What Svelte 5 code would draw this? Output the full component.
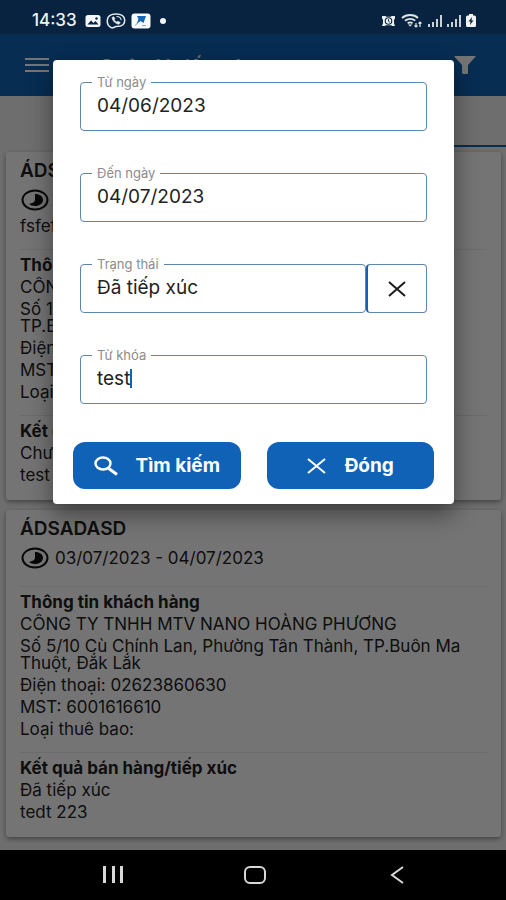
<script>
  let filter = $state({
    fromDate: "04/06/2023",
    toDate: "04/07/2023",
    status: "Đã tiếp xúc",
    keyword: "test",
  });

  const statuses = ["Đã tiếp xúc", "Chưa tiếp xúc"];

  const customer = {
    name: "CÔNG TY TNHH MTV NANO HOÀNG PHƯƠNG",
    phone: "02623860630",
    taxCode: "6001616610",
    type: "",
  };

  const visits = [
    {
      title: "ÁDSADASD",
      period: "03/07/2023 - 04/07/2023",
      note: "fsfef",
      customer,
      address: "Số 10 Cù Chính Lan, Phường Tân Thành,\nTP.Buôn Ma Thuột, Đắk Lắk",
      result: "Chưa tiếp xúc",
      remark: "test",
    },
    {
      title: "ÁDSADASD",
      period: "03/07/2023 - 04/07/2023",
      note: "",
      customer,
      address: "Số 5/10 Cù Chính Lan, Phường Tân Thành, TP.Buôn Ma\nThuột, Đắk Lắk",
      result: "Đã tiếp xúc",
      remark: "tedt 223",
    },
  ];

  function clearStatus() {
    filter.status = "";
  }
</script>

<div class="screen">
  <div class="status-bar">
    <div class="status-left">
      <span class="clock">14:33</span>
      <svg width="16" height="14" viewBox="0 0 16 14">
        <rect x="0.5" y="1" width="15" height="12" rx="2.5" fill="#f4f6f8" />
        <path d="M2.5 10.5l3.5-4 2.5 2.5 2-2 3 3.5z" fill="#07233f" />
        <circle cx="11.5" cy="4.5" r="1.2" fill="#07233f" />
      </svg>
      <svg width="20" height="16" viewBox="0 0 20 16" fill="none" stroke="#e6eaee" stroke-width="1.5">
        <path d="M5 14.5C2 13 1 10.5 1.3 7 1.7 3 4.5 1 10 1s8.500 2 8.700 6-1.700 6.500-8.700 6.500L6.500 15z" />
        <path d="M6 4.500c.4 3.500 3.500 6.300 7 6.800l1.300-1.700-2.300-1.400-1.100.8C9.500 8.500 8.700 7.700 8.200 6.700l.8-1-1.300-2z" fill="#e6eaee" stroke-width="0.6" />
        <path d="M10.500 3.500c2.500 0 4.500 1.500 4.700 3.800" stroke-width="1.1" />
      </svg>
      <svg width="20" height="16" viewBox="0 0 20 16">
        <rect x="0.5" y="0.5" width="19" height="15" rx="3" fill="#f7f9fb" />
        <path d="M6 3h9l-2.500 7-3-2-4 3.500L7.500 6z" fill="#1565b5" />
        <path d="M4 12.500l4-3.500M11 12.500h4" stroke="#8fa6be" />
      </svg>
      <span class="dot"></span>
    </div>
    <div class="status-right">
      <svg width="15" height="12" viewBox="0 0 16 13">
        <path d="M1 1h3.500l1 1h5l1-1H15v3l-1 1v4l1 3h-3l-1-1H5l-1 1H1l1-3V5L1 4z" fill="#eef1f4" />
        <circle cx="8" cy="6.500" r="3.500" fill="none" stroke="#07233f" stroke-width="1.2" />
        <path d="M8 4.500v2.300l1.500 1" fill="none" stroke="#07233f" />
      </svg>
      <svg width="22" height="14" viewBox="0 0 22 14" fill="none" stroke="#dfe4e9" stroke-width="1.8">
        <path d="M1 4c4.500-4 12-4 16 0M4 6.700c3-2.500 7.500-2.500 10.200 0M6.700 9.300c1.300-1.200 3.500-1.200 4.800 0" />
        <path d="M9 12.500l2.500-2H7z" fill="#dfe4e9" stroke="none" />
        <path d="M15 9v4M13.500 11.500l1.500 1.500 1.500-1.500M19 13V8M17.500 9.500L19 8l1.500 1.500" stroke-width="1.2" />
      </svg>
      {#each [1, 2] as sim (sim)}
        <svg width="14" height="12" viewBox="0 0 14 12" fill="#c8d0d8">
          <rect x="0" y="9" width="2" height="3" />
          <rect x="4" y="7" width="2" height="5" />
          <rect x="8" y="4" width="2" height="8" />
          <rect x="12" y="0" width="2" height="12" />
        </svg>
      {/each}
      <svg width="10" height="13" viewBox="0 0 10 13">
        <path d="M3 0h4v1.500h1.500Q10 1.500 10 3v8.500Q10 13 8.500 13h-7Q0 13 0 11.500V3q0-1.500 1.500-1.500H3z" fill="#f1f3f5" />
        <path d="M6 3L2.500 7.500h2L4 11l3.500-4.500h-2z" fill="#07233f" />
      </svg>
    </div>
  </div>

  <header class="app-bar">
    <button class="icon-button" aria-label="Menu">
      <svg width="24" height="15" viewBox="0 0 24 15" fill="#fff">
        <rect width="24" height="2" />
        <rect y="6" width="24" height="2" />
        <rect y="12" width="24" height="2" />
      </svg>
    </button>
    <h1>Quản lý tiếp xúc</h1>
    <button class="icon-button" aria-label="Filter">
      <svg width="22" height="18" viewBox="0 0 22 18" fill="#fff">
        <path d="M1 0h20q1 0 .3 1L14 9v8q0 1-1 1h-4L8 17V9L.7 1Q0 0 1 0z" />
      </svg>
    </button>
  </header>

  <nav class="tabs">
    <button aria-label="Previous"></button>
    <button class="active" aria-label="Current"></button>
  </nav>

  <main>
    {#each visits as visit}
      <article class="card">
        <h2>{visit.title}</h2>
        <div class="period">
          <svg width="28" height="22" viewBox="0 0 28 22">
            <ellipse cx="14" cy="11" rx="12.5" ry="9.5" fill="none" stroke="#111" stroke-width="2" />
            <path d="M14 5c5 0 8 2.600 8 6s-3.500 6-8 6c-2.400 0-4.500-.8-6-2 3.500-1 6-2 6-4z" fill="#111" />
          </svg>
          <span>{visit.period}</span>
        </div>
        {#if visit.note}
          <p class="note">{visit.note}</p>
        {/if}
        <section>
          <h3>Thông tin khách hàng</h3>
          <p>{visit.customer.name}</p>
          <p>{visit.address}</p>
          <p>Điện thoại: {visit.customer.phone}</p>
          <p>MST: {visit.customer.taxCode}</p>
          <p>Loại thuê bao: {visit.customer.type}</p>
        </section>
        <section>
          <h3>Kết quả bán hàng/tiếp xúc</h3>
          <p>{visit.result}</p>
          <p>{visit.remark}</p>
        </section>
      </article>
    {/each}
  </main>

  <footer class="nav-bar">
    <button aria-label="Recent apps">
      <svg width="22" height="18" viewBox="0 0 22 18" fill="#d8d8d8">
        <rect x="1" y="0" width="3" height="17" />
        <rect x="10" y="0" width="3" height="17" />
        <rect x="18" y="0" width="3" height="17" />
      </svg>
    </button>
    <button aria-label="Home">
      <svg width="24" height="20" viewBox="0 0 24 20" fill="none" stroke="#d8d8d8" stroke-width="2">
        <rect x="2" y="2" width="20" height="16" rx="5" />
      </svg>
    </button>
    <button aria-label="Back">
      <svg width="14" height="18" viewBox="0 0 14 18" fill="none" stroke="#d8d8d8" stroke-width="2">
        <path d="M13 1L2 9l11 8" />
      </svg>
    </button>
  </footer>

  <div class="backdrop">
    <form class="dialog" onsubmit={(e) => e.preventDefault()}>
      <div class="fields">
        <div class="field">
          <label for="from-date">Từ ngày</label>
          <input id="from-date" type="text" bind:value={filter.fromDate} />
        </div>
        <div class="field">
          <label for="to-date">Đến ngày</label>
          <input id="to-date" type="text" bind:value={filter.toDate} />
        </div>
        <div class="field-row">
          <div class="field">
            <label for="status">Trạng thái</label>
            <select id="status" bind:value={filter.status}>
              {#each statuses as status}
                <option value={status}>{status}</option>
              {/each}
            </select>
          </div>
          <button type="button" class="clear" aria-label="Clear" onclick={clearStatus}>
            <svg width="18" height="16" viewBox="0 0 18 16" fill="none" stroke="#1c1c1c" stroke-width="2">
              <path d="M1 1l16 14M17 1L1 15" />
            </svg>
          </button>
        </div>
        <div class="field">
          <label for="keyword">Từ khóa</label>
          <input id="keyword" class="keyword" type="text" bind:value={filter.keyword} />
          <span class="caret"></span>
        </div>
      </div>

      <div class="actions">
        <button type="submit">
          <svg width="24" height="20" viewBox="0 0 24 20" fill="none" stroke="#fff">
            <ellipse cx="9" cy="7.5" rx="7.5" ry="6" stroke-width="2.4" />
            <path d="M14 12l9 6.5" stroke-width="3" />
          </svg>
          <span>Tìm kiếm</span>
        </button>
        <button type="button">
          <svg width="20" height="16" viewBox="0 0 20 16" fill="none" stroke="#fff" stroke-width="2">
            <path d="M1 1l17 14M18 1L1 15" />
          </svg>
          <span>Đóng</span>
        </button>
      </div>
    </form>
  </div>
</div>

<style>
  :global(body) {
    margin: 0;
    background: #000;
  }

  .screen {
    position: relative;
    display: flex;
    flex-direction: column;
    min-height: 100vh;
    background: #f0f0f0;
    color: #222;
    font-family: Inter, "Noto Sans", sans-serif;
    font-size: 17px;
    line-height: 17px;
  }

  button,
  input,
  select {
    margin: 0;
    padding: 0;
    border: 0;
    background: none;
    color: inherit;
    font: inherit;
  }

  svg {
    display: block;
    flex: none;
  }

  h1,
  h2,
  h3,
  p {
    margin: 0;
  }

  .status-bar {
    position: relative;
    z-index: 2;
    display: flex;
    justify-content: space-between;
    align-items: center;
    height: 34px;
    padding: 7px 30px 0 32px;
    box-sizing: border-box;
    background: #07233f;
    color: #f1f3f5;
  }

  .status-left,
  .status-right {
    display: flex;
    align-items: center;
    gap: 5px;
  }

  .clock {
    margin-right: 3px;
    font-weight: 500;
  }

  .dot {
    width: 6px;
    height: 6px;
    margin-left: 4px;
    border-radius: 50%;
    background: #f1f3f5;
  }

  .app-bar {
    display: flex;
    align-items: center;
    height: 62px;
    padding: 0 30px 0 25px;
    background: #1062b6;
    color: #fff;
  }

  h1 {
    flex: 1;
    padding: 4px 0 0 50px;
    font-size: 20px;
    font-weight: 600;
    line-height: 24px;
  }

  .tabs {
    display: flex;
    height: 51px;
  }

  .tabs button {
    flex: 1;
  }

  .tabs .active {
    border-bottom: 2px solid #1062b6;
  }

  main {
    display: flex;
    flex: 1;
    flex-direction: column;
    gap: 10px;
    padding: 5px 5px 13px 6px;
  }

  .card {
    padding: 9px 14px 16px;
    border-radius: 3px;
    background: #fdfdfd;
    box-shadow: 0 2px 5px rgba(0, 0, 0, 0.4);
  }

  h2 {
    font-size: 19px;
    font-weight: 600;
    line-height: 20px;
  }

  h3 {
    font-size: 17px;
    font-weight: 700;
    line-height: 17px;
  }

  p {
    white-space: pre-line;
  }

  .period {
    display: flex;
    align-items: center;
    gap: 6px;
    height: 28px;
    margin-top: 5px;
    padding-left: 1px;
  }

  .note {
    margin-top: 4px;
  }

  section {
    display: flex;
    flex-direction: column;
    gap: 5px;
    margin-top: 14px;
    padding-top: 7px;
    border-top: 1px solid #ececec;
  }

  .nav-bar {
    position: relative;
    z-index: 2;
    display: flex;
    justify-content: space-around;
    align-items: center;
    height: 50px;
    padding: 0 38px 0 42px;
    background: #000;
  }

  .nav-bar button {
    display: flex;
    flex: 1;
    justify-content: center;
  }

  .backdrop {
    position: absolute;
    inset: 0;
    z-index: 1;
    padding: 60px 52px 0 53px;
    background: rgba(0, 0, 0, 0.54);
  }

  .dialog {
    padding: 22px 20px 15px;
    border-radius: 4px;
    background: #fff;
    box-shadow: 0 10px 24px rgba(0, 0, 0, 0.45);
  }

  .fields {
    display: flex;
    flex-direction: column;
    gap: 42px;
    padding: 0 7px;
  }

  .field {
    position: relative;
    display: flex;
    flex: 1;
    align-items: center;
    height: 49px;
    box-sizing: border-box;
    padding: 0 16px 2px;
    border: 1px solid #5f86ad;
    border-radius: 4px;
    font-size: 19px;
  }

  .fields > .field {
    flex: none;
  }

  .field label {
    position: absolute;
    top: -8px;
    left: 11px;
    padding: 0 5px;
    background: #fff;
    color: #8c8c8c;
    font-size: 13px;
    line-height: 14px;
  }

  .field input,
  .field select {
    width: 100%;
    height: 28px;
    line-height: 28px;
    outline: 0;
    appearance: none;
  }

  .field .keyword {
    width: auto;
    field-sizing: content;
    caret-color: transparent;
  }

  .caret {
    width: 2px;
    height: 19px;
    background: #1062b6;
  }

  .field-row {
    display: flex;
  }

  .clear {
    display: flex;
    justify-content: center;
    align-items: center;
    width: 61px;
    border: 1px solid #5f86ad;
    border-left: 2px solid #1062b6;
    border-radius: 4px;
  }

  .actions {
    display: flex;
    gap: 26px;
    margin-top: 38px;
  }

  .actions button {
    display: flex;
    flex: 1;
    justify-content: center;
    align-items: center;
    gap: 18px;
    height: 47px;
    border-radius: 12px;
    background: #1062b6;
    color: #fff;
    font-size: 19px;
    font-weight: 700;
  }
</style>
